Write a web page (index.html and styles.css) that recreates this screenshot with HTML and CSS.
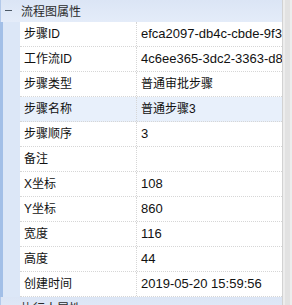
FILE: index.html
```html
<!DOCTYPE html>
<html lang="zh-CN">
<head>
<meta charset="utf-8">
<title>流程图属性</title>
<link rel="stylesheet" href="styles.css">
</head>
<body>
<div class="grid">
  <div class="main">
    <section class="group">
      <div class="group-hd"><span class="toggle"></span><span class="title">流程图属性</span></div>
      <div class="group-bd">
        <div class="row"><div class="key">步骤ID</div><div class="val">efca2097-db4c-cbde-9f3a-7d0c21b4e655</div></div>
        <div class="row"><div class="key">工作流ID</div><div class="val">4c6ee365-3dc2-3363-d8a1-5b9e02f7c41a</div></div>
        <div class="row"><div class="key">步骤类型</div><div class="val zh">普通审批步骤</div></div>
        <div class="row selected"><div class="key">步骤名称</div><div class="val zh">普通步骤3</div></div>
        <div class="row"><div class="key">步骤顺序</div><div class="val">3</div></div>
        <div class="row"><div class="key">备注</div><div class="val"></div></div>
        <div class="row"><div class="key">X坐标</div><div class="val">108</div></div>
        <div class="row"><div class="key">Y坐标</div><div class="val">860</div></div>
        <div class="row"><div class="key">宽度</div><div class="val">116</div></div>
        <div class="row"><div class="key">高度</div><div class="val">44</div></div>
        <div class="row"><div class="key">创建时间</div><div class="val">2019-05-20 15:59:56</div></div>
      </div>
    </section>
    <section class="group">
      <div class="group-hd"><span class="toggle"></span><span class="title">执行人属性</span></div>
    </section>
  </div>
  <div class="scroll"><div class="thumb"></div></div>
</div>
</body>
</html>
```

FILE: styles.css
```css
html, body {
  margin: 0;
  padding: 0;
  background: #ffffff;
}

body {
  width: 292px;
  height: 305px;
  overflow: hidden;
  font-family: "Liberation Sans", "Noto Sans CJK SC", sans-serif;
  color: #111111;
}

.grid {
  display: flex;
  height: 305px;
  overflow: hidden;
}

.main {
  flex: 1;
  min-width: 0;
  display: flex;
  flex-direction: column;
  overflow: hidden;
}

.group {
  flex: none;
}

.group-hd {
  height: 22px;
  display: flex;
  align-items: flex-start;
  background: linear-gradient(to bottom, #dbe5f5, #e4ecf9);
  border-left: 1px solid #b3c9ea;
  box-sizing: border-box;
  font-size: 12px;
  color: #2b2b2b;
  overflow: hidden;
}

.toggle {
  width: 7px;
  height: 1px;
  background: #4d5966;
  margin-left: 4px;
  margin-right: 9px;
  margin-top: 10px;
}

.title {
  line-height: 18px;
  padding-top: 3px;
  white-space: nowrap;
}

.group-bd {
  padding-left: 20px;
  background: linear-gradient(to right, #a2bfe7 0, #a2bfe7 3px, #dce7f7 3px);
}

.row {
  display: grid;
  grid-template-columns: 117px 1fr;
  height: 25px;
  box-sizing: border-box;
  border-bottom: 1px dotted #d6d6d6;
  background: #ffffff;
}

.row.selected {
  background: #e8f0fb;
}

.key {
  font-size: 12px;
  line-height: 24px;
  padding-left: 4px;
  border-right: 1px dotted #d6d6d6;
  white-space: nowrap;
  overflow: hidden;
}

.val {
  font-size: 13px;
  line-height: 24px;
  padding-left: 4px;
  white-space: nowrap;
  overflow: hidden;
}

.val.zh {
  font-size: 12px;
}

.scroll {
  width: 9px;
  flex: none;
  background: #ededed;
  border-left: 1px solid #d2d2d2;
  display: flex;
  justify-content: center;
}

.thumb {
  width: 5px;
  background: #e2e2e2;
}
```
